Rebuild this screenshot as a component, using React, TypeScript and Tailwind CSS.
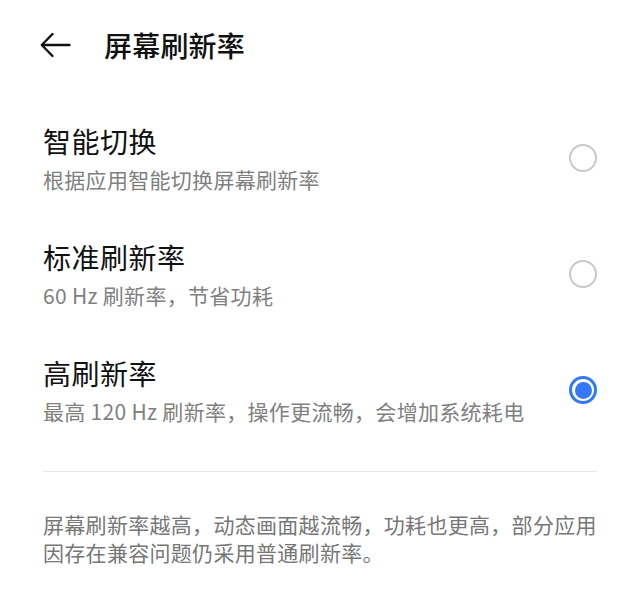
import React from "react";

const items = [
  { title: "智能切换", sub: "根据应用智能切换屏幕刷新率", checked: false },
  { title: "标准刷新率", sub: "60 Hz 刷新率，节省功耗", checked: false },
  { title: "高刷新率", sub: "最高 120 Hz 刷新率，操作更流畅，会增加系统耗电", checked: true },
];

function Radio({ checked }: { checked: boolean }) {
  if (checked) {
    return (
      <div className="w-[28px] h-[28px] rounded-full border-[3px] border-[#3478f6] flex items-center justify-center">
        <div className="w-[17px] h-[17px] rounded-full bg-[#3478f6]" />
      </div>
    );
  }
  return <div className="w-[28px] h-[28px] rounded-full border-[2.5px] border-[#c9c9c9]" />;
}

export default function App() {
  return (
    <div
      className="w-[640px] h-[595px] bg-white overflow-hidden"
      style={{ fontFamily: '"Noto Sans CJK SC", "Noto Sans", sans-serif' }}
    >
      <div className="h-[100px] flex items-start pt-[27px]">
        <div className="flex items-center h-[36px] pl-[40px]">
          <svg width="31" height="26" viewBox="0 0 31 26" fill="none" stroke="#111" strokeWidth="2.4" strokeLinecap="round" strokeLinejoin="round">
            <path d="M29.5 13H2.5" />
            <path d="M12.5 2L1.8 13L12.5 24" />
          </svg>
          <span className="ml-[33px] text-[28px] leading-[36px] font-medium text-[#111] tracking-[0.2px]">屏幕刷新率</span>
        </div>
      </div>
      <div className="flex flex-col">
        {items.map((it) => (
          <div key={it.title} className="h-[116px] flex items-center pl-[43px] pr-[43px]">
            <div className="flex-1 flex flex-col">
              <div className="text-[28px] leading-[36px] text-[#111] tracking-[0.5px]">{it.title}</div>
              <div className="mt-[5px] text-[21px] leading-[30px] text-[#808080] tracking-[0.3px]">{it.sub}</div>
            </div>
            <div className="mt-0">
              <Radio checked={it.checked} />
            </div>
          </div>
        ))}
      </div>
      <div className="mx-[43px] mt-[23px] h-px bg-[#e6e6e6]" />
      <div className="mx-[43px] pt-[38px] text-[21px] leading-[28px] text-[#777] tracking-[0.3px]">
        <div>屏幕刷新率越高，动态画面越流畅，功耗也更高，部分应用</div>
        <div>因存在兼容问题仍采用普通刷新率。</div>
      </div>
    </div>
  );
}
